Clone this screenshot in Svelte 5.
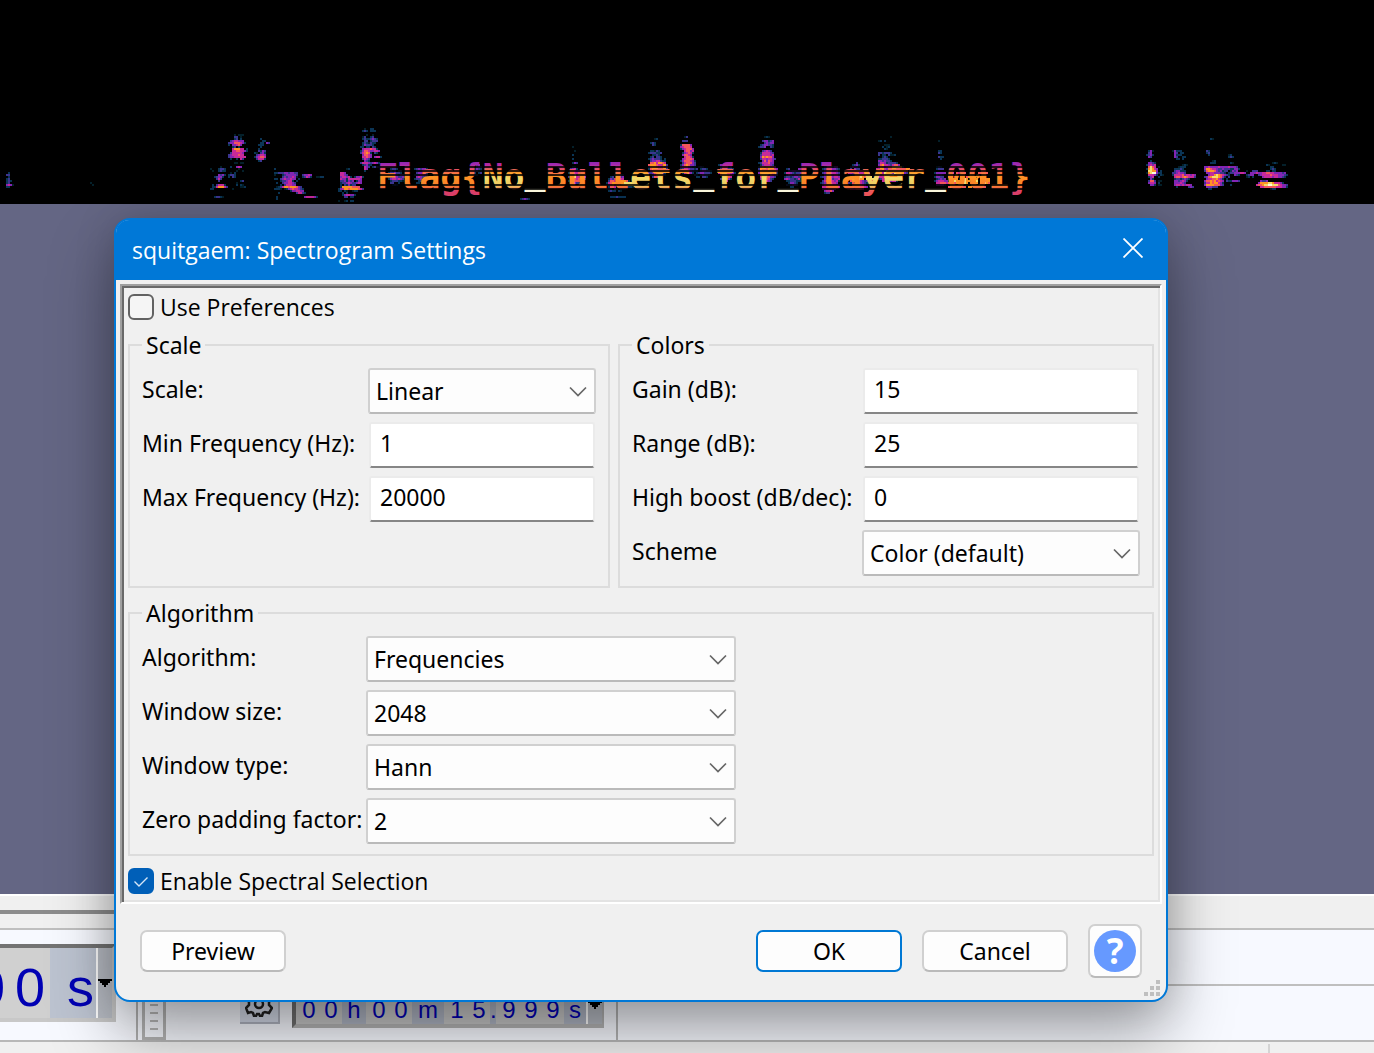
<script>
  const palette = {
    a: '#04202a', b: '#0b3556', c: '#3b3590', d: '#8226b4', e: '#c62a9a',
    f: '#f2565c', g: '#ff9424', h: '#f3dd6c', i: '#fffbe0',
  };

  // Energy clusters of the spectrogram, one letter for each 2px cell.
  const clusters = [
    { x: 6, y: 172, rows: ['.b', 'cc', '.b', 'bc', 'bcb', 'bc', 'deda', 'bb'] },
    { x: 90, y: 182, rows: ['a', '.a'] },
    { x: 228, y: 134, rows: ['...a.aaa', '...cc.a', '...bc.b', '.cdeeddd', 'cddfffedb', 'b.ddefd', '..bc.b', '..egggee.b', '..eeffeedb', '.ceeeeed', 'cdeeefee', 'cddeeeeee', '.b..b.ec'] },
    { x: 254, y: 138, rows: ['...b', '....bb', '...bb.dc', '..bbb', '...b', '..b', '..cbdc', 'ba.cdb', '.cdeed', 'bdeffe', '.ceeeb', '..bc'] },
    { x: 210, y: 162, rows: ['............aa.aa', '................', '.....a....b..ded', 'a...bccb......a.', '.a..bcbb.....a..a', '..........a.b...', '....dcdb.bccb', '..bcddb..b.cb....', '...cec.......', '....c..........bc', '.............a', '.b.ceeeb.....b.ba', '.bbegggec......aab', 'bb.........a', '', '', '', '..bccba'] },
    { x: 274, y: 168, rows: ['b.....', '', 'bbcccddcddcc', 'a...bcdddddc..cdded', '....cdcddeda..bcedb..aabb', 'bb.cdeddedd.b', '...bccdeeb.b', '.b..cddeedc', '...b.ceeedd', '.abceggfgggfdc', 'bbba.abdefeedcb', '........bddeedd', '..b........ceecb', '', '.b.............deeeedb', '.b'] },
    { x: 338, y: 168, rows: ['....ab', '', '.eed', '.eedc', '.deedeb.bddeb', '.eddbeeeeeed', '.ccdbdcd.bdd', '.bccdedccded', '.b.cbdbcc', '.bgggggffff', 'bdeggfggggfec', 'bb.ba..abb', '..b.b', '..bdeeddb', '...cc.bb', '', 'a..ab.bb'] },
    { x: 360, y: 128, rows: ['..a..bb', '.bcb.bbb', '', '...a..a', '.ac..bc', '.bcbbcdcb', '..cc.bccc', '.bcbacbb', '.bdcccb', 'bb.bb.cb', '.deeefeeb', 'bdffeddeed', 'cefgfb.cb', '.dffed', '.eefed.deeb', '.cedc', '..dcb', 'ceeedcdedb', '.bcdbb', '..edc.bccb', '..ed', '..b'] },
    { x: 388, y: 168, rows: ['.bccb', '.cbc.bc', 'bccdccb', '.bcdcbdcb', 'bcdedccdc', 'bdeededc', '.bcccbba', '.cc..b', '..bcb'] },
    { x: 414, y: 168, rows: ['bcdcddb', '.cccedccb', '.cddedb', 'bcceedc', '.dedccb', 'bccdb', '..bccb', '.bb'] },
    { x: 470, y: 164, rows: ['...cd', '.b.cdb', '..bdcb.c', '..ccbb.ccb', '.bb.bc.b', '..bb...b'] },
    { x: 520, y: 198, rows: ['bcdcb'] },
    { x: 568, y: 146, rows: ['..a', '', '...a', '', '..b', '', '..b', '', '..bdc', '', '..bb', '.cdeb', '.beeddc', 'bceeefdc', '.dhheggec', 'cdfheefgd', '.effeffdb', 'bdefffec', '.bcdccb'] },
    { x: 606, y: 174, rows: ['....b..cb', '..bc.bccd', '.bdceeeee', '.cffeffgggfb', 'befggffgghhhhh', 'bdfgefghhhhhhh', '.bffe.edccbbba', 'bcb.eb.cbba', '.bcbb.ba'] },
    { x: 608, y: 196, rows: ['.bbbcbbbb'] },
    { x: 648, y: 138, rows: ['...ab', '', '.bcb', '..cb', '', '', '.bbacb', 'bcccbbc', '..bbcb', '.bc.ccb', 'bcdcccb.b', '.cddeecbb', '.ffgeggfe', 'fgggffgggc', 'cgggffgged', 'bfggghhggc', '.effggeec', 'ccdfgfdcb', '.bceggecb', '..cfffc'] },
    { x: 678, y: 136, rows: ['...ac', '', '..ccc', '', '.bffffd', '.defffe', '.bdefffd', '...effde', '..bdefeb', '..dffed', '...effeb', '..defffe', '.bdfffedb', '..cefffdc', '.bdfgfddc', '.deffdcb', '.bceedccb', '.cdffedcb', '..beeedb'] },
    { x: 694, y: 166, rows: ['b.bcb', '.c.bccb', 'bb.cddccb', '.bcddcccb', 'cb.bdccb', '.bb.ccb'] },
    { x: 718, y: 164, rows: ['bddccdb', '.c.eebc', '.cdddccb', 'bfeedcbc', 'egggffedb', '.fgggfec', '..bfgfe', '.cefgdb', '..dee'] },
    { x: 758, y: 136, rows: ['...aba', '', '..cddbcd', '...cdcdd', '.bcddccb', 'bccd..cb', '', '..cdedc', '.beeeedc', '.ceeeede', '.dgfgffd', '.ceedeedc', '..dfdfed', 'bceeefdd', '.bdeeedc', 'bfgfggffe', 'cgggfggged', 'cggfgfggee', 'dggfeggfdb', 'bgggedfedc', '.effffddc', '.dggfecb', '..feedc'] },
    { x: 784, y: 168, rows: ['.bc....dd', '..ccddccb', 'beedcbccd', '.cedcddeb', 'bccbcddccb', 'dedccbceb', '.bbcccbbb', '..bddcb', '.cbcddc', '...bb'] },
    { x: 820, y: 164, rows: ['....c', '..b.dcbdd', '.bcdeeddcb', 'bbdeedddeb', '.cdecdeedc', '..deebdeec', 'bcddeddeed', '..deedcdde', '.cefgeedeb', 'bcdefeeed', '.dffefeedc', '.eeffffeee', '.deefeed', '..deefd', '..bcc'] },
    { x: 848, y: 162, rows: ['....c', '..bcdb', '.bdccb', '.c.dcc', 'gggggfffb', 'eedcbdeeffc', '.bcdefgggfd', '.cfhhhhgfehh', 'bghhhhgg.hhhh', '.fgggfedcdeff', 'cbfeefedcb', '..efggfec', '.effffffed', '.eeefffe'] },
    { x: 876, y: 136, rows: ['.......a', '', '.ab.b', '', '....aaa', '...b.ab', '....ba', '', '.ccbcccb', '.c.bb.caab', '...bcb', '.bbcccb', '.ddcdccb', '.ceedbccccb', '.dfgeedceffd', '.egfdeffhhhhgb', 'eeggedffggfffffgg', '.ffeehhhhhhggggf', 'cfgehhdddhhgggdc', '.eefhhhhhgggfe', '.deegffggggfe', '.bceeffggfdb', '...eee.deeb'] },
    { x: 934, y: 140, rows: ['..a', '', '', '', '', '..bb', '..cb', '', '..cbb', '...b', '', '', '', '.bcb', '.bccc', '', 'bddddd', '.dccb', 'bddcc', '.bcdcd', 'bdeeedd', '.eefffe', '.ddddb'] },
    { x: 948, y: 172, rows: ['.ed.fe.gf..fg..ff.gf', '', 'ff.eg.gf.fg.gg..gf', '.gggg.ghhg.ghgg.ghhgg', 'bgghgg.ghgg.ggh.ggfgg', 'fggfgg.fhg.ffgg.gghgf', '', 'fg.ff..ff.gg..fg.ff'] },
    { x: 1146, y: 150, rows: ['.bda', '.cd', 'bcdb', '.dc', '', '..b', '.ddcb', 'bdede', '.fhfe.a', 'bghged', '.hhggd.b', 'aghiidbb', '.eeedb.ba', '.bde..b', '..db', '.cffc.aa', '.deed.b', '..ddb.aa'] },
    { x: 1172, y: 150, rows: ['adbbb', '.dc.bb', '.dbbb', '.dc..bb', '..bb.b', '', '', '.....aba', '...abbb', '.bbbcb', '.cddbbb', 'ccdeddc', 'beeeefdeeded', '.effefgfeeec', '.bccbcdcb', '.ddcdedb', '.dddedc', '.deededeed', '..b.....cdc'] },
    { x: 1204, y: 138, rows: ['...ba', '', '', '', '', '', '.cb', '.bc', '..b.........ab', '............bcb', '', '....ab', '...bbb.......ba', '', 'ddeddddeddddedddc', 'dggfeedccdcccbbddb', 'cfgggfdcdbcc.bdcd', '.ddeedddccb.bccdddeed', '..deeghgfedcb..dcb', 'cdfghhhgfdb.c', '.deeffgedb.b', 'dffgfgefed.cbbdddc', 'ceegfggedb', 'dggggfffdc...b', '.dddccc', '..bb'] },
    { x: 1246, y: 162, rows: ['.............aba', '..........ba......aa', '............bb', '............bcb', 'a..ccc....bb.bb', '..dddeddeeffeeddddcd', 'bcdd..cdeeeefeeedddcb', 'ab.b....deeeedeeddcb', '', '.......dccd', '......dgggghhgeeedb', '.....effghhiihhhfeddc', '.......eeffffffeeeddb', '............abb'] },
  ];

  // Horizontal runs of equal level become one rectangle each.
  const bars = clusters.flatMap(({ x, y, rows }) =>
    rows.flatMap((row, r) =>
      [...row.matchAll(/([a-i])\1*/g)].map((m) => ({
        x: x + m.index * 2, y: y + r * 2, w: m[0].length * 2, fill: palette[m[1]],
      }))
    )
  );

  const message = [
    ['Flag{', 'warm'], ['No', 'hot'], ['_', 'peak'], ['Bull', 'warm'], ['ets', 'hot'], ['_', 'peak'],
    ['for', 'hot'], ['_', 'peak'], ['Pla', 'warm'], ['yer', 'hot'], ['_', 'peak'], ['001}', 'warm'],
  ];
  const letters = message.map(([t]) => t).join('');
  const rise = [...letters].map((c, i) => (c === '_' ? -5 : letters[i - 1] === '_' ? 5 : 0)).join(' ');

  let usePreferences = $state(false);
  let spectralSelection = $state(true);

  const groups = [
    { title: 'Scale', kind: 'scale', fields: [
      { id: 'scale', label: 'Scale:', value: 'Linear', options: ['Linear', 'Logarithmic', 'Mel', 'Bark', 'ERB', 'Period'] },
      { id: 'min', label: 'Min Frequency (Hz):', value: '1' },
      { id: 'max', label: 'Max Frequency (Hz):', value: '20000' },
    ] },
    { title: 'Colors', kind: 'colors', fields: [
      { id: 'gain', label: 'Gain (dB):', value: '15' },
      { id: 'range', label: 'Range (dB):', value: '25' },
      { id: 'boost', label: 'High boost (dB/dec):', value: '0' },
      { id: 'scheme', label: 'Scheme', value: 'Color (default)', options: ['Color (default)', 'Color (classic)', 'Grayscale'] },
    ] },
    { title: 'Algorithm', kind: 'algorithm', fields: [
      { id: 'algorithm', label: 'Algorithm:', value: 'Frequencies', options: ['Frequencies', 'Reassignment', 'Pitch (EAC)'] },
      { id: 'size', label: 'Window size:', value: '2048', options: ['1024', '2048', '4096'] },
      { id: 'type', label: 'Window type:', value: 'Hann', options: ['Hann', 'Hamming', 'Blackman'] },
      { id: 'padding', label: 'Zero padding factor:', value: '2', options: ['1', '2', '4'] },
    ] },
  ];

  const time = [['00', 'digits'], ['h', 'unit'], ['00', 'digits'], ['m', 'unit wide'], ['15', 'digits'], ['.', 'unit dot'], ['999', 'digits'], ['s', 'unit last']];
</script>

<main class="app">
  <svg class="spectrogram" width="1374" height="204" viewBox="0 0 1374 204">
    <defs>
      <linearGradient id="warm" gradientUnits="userSpaceOnUse" x1="0" y1="160" x2="0" y2="200">
        <stop offset="0" stop-color="#8226b4" /><stop offset=".12" stop-color="#a42ab0" />
        <stop offset=".25" stop-color="#f2565c" /><stop offset=".42" stop-color="#ff9424" />
        <stop offset=".65" stop-color="#ff8030" /><stop offset=".78" stop-color="#e0406c" />
      </linearGradient>
      <linearGradient id="hot" gradientUnits="userSpaceOnUse" x1="0" y1="160" x2="0" y2="200">
        <stop offset="0" stop-color="#8226b4" /><stop offset=".15" stop-color="#c62a9a" />
        <stop offset=".3" stop-color="#ff9424" /><stop offset=".45" stop-color="#f3dd6c" />
        <stop offset=".65" stop-color="#f3c860" /><stop offset=".78" stop-color="#f2565c" />
      </linearGradient>
      <linearGradient id="peak"><stop stop-color="#fffbe0" /></linearGradient>
    </defs>
    <g shape-rendering="crispEdges">
      {#each bars as b}<rect x={b.x} y={b.y} width={b.w} height="2" fill={b.fill} />{/each}
    </g>
    <text class="message" x="377" y="189" dy={rise}>{#each message as [t, heat]}<tspan fill="url(#{heat})">{t}</tspan>{/each}</text>
    <g shape-rendering="crispEdges" fill="#000" opacity=".8">
      {#each [166, 170, 174, 184, 188] as y}<rect x="376" {y} width="654" height="2" />{/each}
    </g>
  </svg>

  <div class="track"></div>
  <div class="ruler"><div class="scroll"></div></div>
  <div class="dock">
    <div class="left">
      <div class="clock">
        <span class="big digits"><b>0</b><b>0</b></span><span class="big unit">s</span>
        <button class="drop" aria-label="Time format"><svg width="14" height="8" viewBox="0 0 14 8"><path d="M0 0h14v2h-2v2h-2v2H8v2H6V6H4V4H2V2H0z" /></svg></button>
      </div>
    </div>
    <div class="right">
      <div class="upper"></div>
      <div class="lower">
        <div class="grip"></div>
        <button class="gear" aria-label="Options">
          <svg width="28" height="28" viewBox="0 0 28 28" fill="none" stroke="#222" stroke-width="2.5">
            <path d="M11 2h6l1 4 3 1 4-2 2 5-3 3v3l3 3-3 5-4-1-2 1-1 3h-2l-1-2h-2l-1 2H9l-1-3-2-1-3 1-2-5 3-3v-3L1 10l2-5 4 2 3-1z" /><circle cx="14" cy="15" r="4" />
          </svg>
        </button>
        <div class="position">
          {#each time as [t, kind]}<span class={kind}>{#each t as c}<b>{c}</b>{/each}</span>{/each}
          <button class="drop" aria-label="Position format"><svg width="14" height="8" viewBox="0 0 14 8"><path d="M0 0h14v2h-2v2h-2v2H8v2H6V6H4V4H2V2H0z" /></svg></button>
        </div>
      </div>
    </div>
  </div>
  <div class="status"><div></div></div>

  <div class="dialog" role="dialog" aria-labelledby="title">
    <header>
      <h1 id="title">squitgaem: Spectrogram Settings</h1>
      <button class="close" aria-label="Close"><svg width="20" height="20" viewBox="0 0 20 20"><path d="M0.5 0.5l19 19M19.5 0.5l-19 19" fill="none" stroke="#fff" stroke-width="1.8" /></svg></button>
    </header>
    <section class="panel">
      <label class="check"><input type="checkbox" bind:checked={usePreferences} /><span>Use Preferences</span></label>
      <div class="groups">
        {#each groups as g}
          <fieldset class={g.kind}>
            <legend>{g.title}</legend>
            <div class="fields">
              {#each g.fields as f}
                <label for={f.id}>{f.label}</label>
                {#if f.options}
                  <div class="combo">
                    <select id={f.id} value={f.value}>{#each f.options as o}<option>{o}</option>{/each}</select>
                    <svg width="18" height="11" viewBox="0 0 18 11"><path d="M1 1.5l8 8 8-8" fill="none" stroke="#666" stroke-width="1.7" /></svg>
                  </div>
                {:else}
                  <input type="text" id={f.id} value={f.value} />
                {/if}
              {/each}
            </div>
          </fieldset>
        {/each}
      </div>
      <label class="check">
        <input type="checkbox" bind:checked={spectralSelection} />
        {#if spectralSelection}<svg class="tick" width="26" height="26" viewBox="0 0 26 26"><path d="M6.5 13.5l4.5 4.5 8.500-8.500" fill="none" stroke="#d5e6f7" stroke-width="1.4" /></svg>{/if}
        <span>Enable Spectral Selection</span>
      </label>
    </section>
    <footer>
      <button class="action">Preview</button>
      <span class="space"></span>
      <button class="action default">OK</button>
      <button class="action">Cancel</button>
      <button class="help" aria-label="Help"><span>?</span></button>
    </footer>
    <svg class="sizer" width="16" height="16" viewBox="0 0 16 16" fill="#bfbfbf"><path d="M12 0h4v4h-4zM6 6h4v4H6zM12 6h4v4h-4zM0 12h4v4H0zM6 12h4v4H6zM12 12h4v4h-4z" /></svg>
  </div>
</main>

<style>
  :global(body) { margin: 0; background: #f0f0f0; }
  * { box-sizing: border-box; }
  button { padding: 0; font: inherit; }
  .app { position: relative; display: flex; flex-direction: column; min-height: 100vh; overflow: hidden; background: #000; font: 23px/28px "Noto Sans", "Open Sans", sans-serif; color: #000; }
  .spectrogram { display: block; flex: none; }
  .message { font: bold 35px "DejaVu Sans Mono", monospace; }
  .track { flex: 1; min-height: 690px; background: #646684; }
  .ruler { height: 36px; padding-top: 14px; border-top: 2px solid #fff; border-bottom: 2px solid #bfbfbf; background: #f0f0f0; }
  .scroll { width: 600px; height: 4px; background: #8c8c8c; }
  .dock { display: flex; height: 110px; background: #f7f9ff; }
  .left { flex: none; width: 138px; padding-top: 14px; border-right: 2px solid #b0b0b0; }
  .clock { display: flex; align-items: stretch; width: 116px; height: 78px; border-top: 4px solid #737373; border-right: 4px solid #c8c8c8; border-bottom: 4px solid #c8c8c8; background: #bcc3d0; }
  .clock > .digits { display: flex; flex: none; justify-content: flex-end; width: 50px; overflow: hidden; background: #d0d0d0; }
  .clock b { flex: none; width: 40px; font-weight: normal; text-align: center; }
  .big { font: 54px/78px "Liberation Sans", sans-serif; color: #0000b4; }
  .clock .unit { flex: none; width: 46px; padding-left: 17px; }
  .drop { width: 18px; border: 0; border-left: 2px solid #fff; background: #b8bcc4; display: flex; align-items: center; }
  .right { flex: 1; padding-left: 4px; }
  .upper { height: 56px; border-bottom: 2px solid #bfbfbf; }
  .lower { display: flex; width: 476px; height: 54px; border-right: 2px solid #b4b4b4; }
  .grip { width: 24px; border: 3px solid #b4b4b4; border-top: 0; background: repeating-linear-gradient(#b8b8b8 0 2px, transparent 2px 8px) center 2px / 8px 43px no-repeat; }
  .gear { width: 40px; height: 38px; margin-left: 74px; border: 0; border-bottom: 2px solid #b0b4c0; border-right: 2px solid #b0b4c0; background: #d6dcea; display: flex; align-items: end; justify-content: center; padding-bottom: 5px; }
  .position { display: flex; width: 312px; height: 42px; margin-left: 12px; border: solid #b4b4b4; border-width: 0 2px 4px 4px; border-left-color: #707070; background: #b0b6c4; font: 24px/48px "Liberation Sans", sans-serif; color: #0000b4; }
  .position span { display: flex; }
  .position b { width: 22px; font-weight: normal; text-align: center; }
  .position .digits { padding-left: 2px; background: #c8c8c8; }
  .position .unit b { width: 24px; }
  .position .wide b { width: 32px; }
  .position .dot b { width: 6px; }
  .position .last b { width: 22px; }
  .status { height: 13px; padding-top: 2px; border-top: 2px solid #b8b8b8; background: #f0f0f0; }
  .status div { width: 1270px; height: 9px; border-right: 2px solid #d4d4d4; }

  .dialog { position: absolute; left: 114px; right: 206px; top: 218px; overflow: visible; border: 2px solid #0078d7; border-radius: 16px; background: #f0f0f0; box-shadow: 0 32px 64px rgba(0, 0, 0, .35), 0 0 40px rgba(0, 0, 0, .15); }
  header { display: flex; align-items: center; justify-content: space-between; height: 60px; padding: 0 23px 0 16px; border-radius: 13px 13px 0 0; background: #0078d7; color: #fff; }
  h1 { margin: 0; font: 23px/28px "Open Sans", "Noto Sans", sans-serif; }
  .close { display: flex; border: 0; background: none; padding-bottom: 4px; }
  .panel { display: flex; flex-direction: column; gap: 11px; margin: 4px 4px 0; padding: 8px 6px; border: 2px solid; border-color: #a0a0a0 #fff #fff #a0a0a0; box-shadow: inset 2px 2px #696969, inset -2px -2px #e3e3e3; }
  .check { position: relative; display: flex; align-items: center; gap: 6px; height: 26px; font-family: "Open Sans", "Noto Sans", sans-serif; }
  .check input { appearance: none; width: 26px; height: 26px; margin: 0; border: 2px solid #626262; border-radius: 6px; background: #f5f5f5; }
  .check input:checked { border-color: #005fb8; background: #005fb8; }
  .tick { position: absolute; left: 0; top: 0; pointer-events: none; }
  .groups { display: grid; grid-template-columns: 482fr 536fr; gap: 11px 8px; padding-bottom: 1px; }
  fieldset { min-width: 0; margin: 0; padding: 9px 12px 10px; border: 2px solid #dcdcdc; }
  .algorithm { grid-column: 1 / -1; }
  legend { padding: 0 4px; line-height: 28px; }
  .fields { display: grid; grid-auto-rows: 46px; gap: 8px 0; align-items: center; white-space: nowrap; }
  .fields > label { padding-bottom: 4px; }
  .scale .fields { grid-template-columns: 226px 1fr; min-height: 208px; align-content: start; }
  .colors .fields { grid-template-columns: 230px 1fr; }
  .algorithm .fields { grid-template-columns: 224px 370px; }
  .combo { position: relative; height: 46px; }
  .combo svg { position: absolute; right: 9px; top: 18px; pointer-events: none; }
  select { appearance: none; width: 100%; height: 46px; padding: 0 30px 0 6px; border: 2px solid #d0d0d0; border-bottom-color: #bababa; border-radius: 3px; background: #fdfdfd; color: #000; font: inherit; }
  input[type='text'] { width: calc(100% - 2px); min-width: 0; height: 46px; margin: 0 1px; padding: 0 9px 4px; border: 2px solid #ebebeb; border-bottom-color: #868686; border-radius: 3px; background: #fff; color: #000; font: inherit; }
  footer { display: flex; align-items: center; gap: 20px; height: 96px; padding: 0 24px 2px; }
  .space { flex: 1; }
  .action { width: 146px; height: 42px; border: 2px solid #d0d0d0; border-bottom-color: #bababa; border-radius: 7px; background: #fdfdfd; color: #000; }
  .default { border-color: #0078d4; }
  .help { display: flex; align-items: center; justify-content: center; width: 54px; height: 54px; border: 2px solid #d0d0d0; border-bottom-color: #bababa; border-radius: 7px; background: #fdfdfd; }
  .help span { width: 42px; height: 42px; border-radius: 50%; background: #6699ff; color: #fff; font: bold 35px/42px "Noto Sans", sans-serif; }
  .sizer { position: absolute; right: 6px; bottom: 4px; }
</style>
